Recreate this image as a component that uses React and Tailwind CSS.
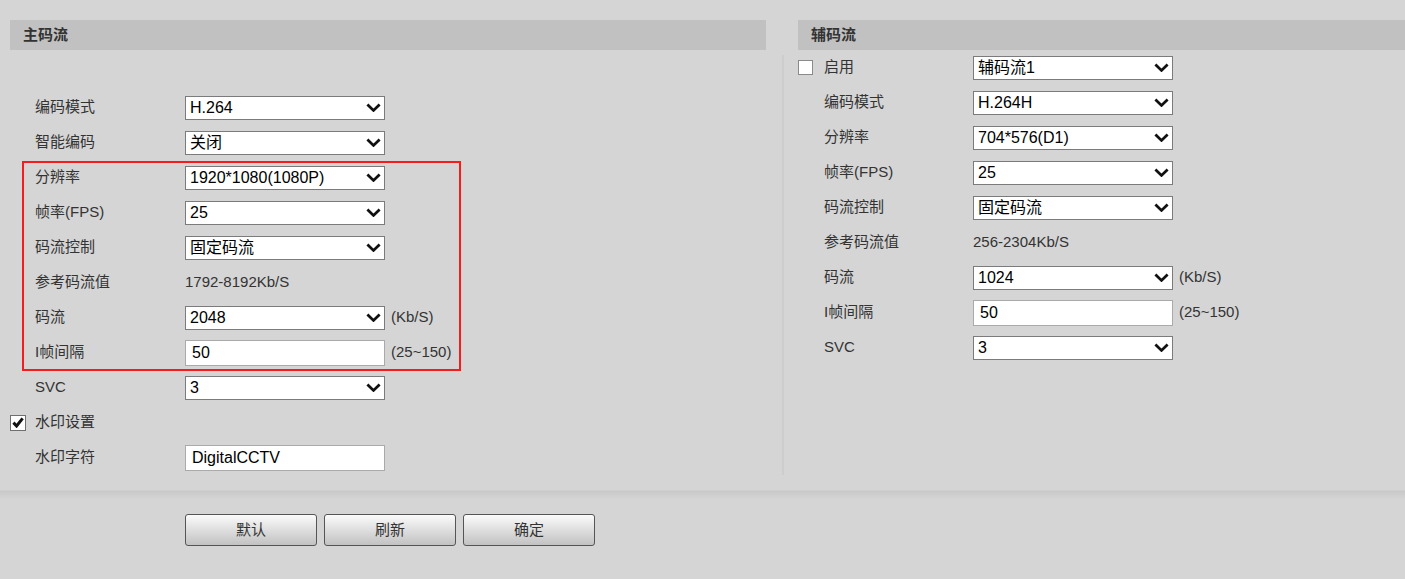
import React from "react";

const Chevron = () => (
  <svg width="15" height="9" viewBox="0 0 15 9" className="shrink-0">
    <path d="M1.4 1.6 L7.5 7.4 L13.6 1.6" fill="none" stroke="#111" strokeWidth="2.8" />
  </svg>
);

const Select = ({ value }) => (
  <div className="flex items-center justify-between w-[200px] h-[24px] bg-white border border-[#7b7b7b] pl-[4px] pr-[3px] text-[16px] text-black leading-none">
    <span>{value}</span>
    <Chevron />
  </div>
);

const TextBox = ({ value }) => (
  <div className="flex items-center w-[200px] h-[26px] bg-white border border-[#aaaaaa] pl-[6px] text-[16px] text-black leading-none">
    {value}
  </div>
);

const Unit = ({ children }) => <span className="ml-[6px] text-[15px] text-[#333]">{children}</span>;

const Row = ({ label, side = "left", children }) => (
  <div className={`flex items-center h-[35px] ${side === "left" ? "pl-[25px]" : "pl-[26px]"}`}>
    <div className={`${side === "left" ? "w-[150px]" : "w-[149px]"} text-[15px] text-[#333]`}>{label}</div>
    {children}
  </div>
);

const CheckBox = ({ checked }) => (
  <div
    className={`flex items-center justify-center bg-white ${
      checked ? "w-[16px] h-[16px] border border-[#6f6f6f]" : "w-[15px] h-[15px] border border-[#8a8a8a]"
    }`}
  >
    {checked && (
      <svg width="12" height="11" viewBox="0 0 12 11">
        <path d="M1.4 5.6 L4.6 9 L10.6 1.4" fill="none" stroke="#111" strokeWidth="3" />
      </svg>
    )}
  </div>
);

const Header = ({ title }) => (
  <div className="flex items-center h-[30px] bg-[#c1c1c1] pl-[13px] text-[15px] font-bold text-[#333]">{title}</div>
);

const App = () => {
  return (
    <div className="w-[1405px] h-[579px] bg-[#d5d5d5] font-['Liberation_Sans','Noto_Sans_CJK_SC',sans-serif] overflow-hidden">
      <div className="flex pt-[20px] pb-[15px] pl-[10px]">
        {/* main stream */}
        <div className="w-[756px]">
          <Header title="主码流" />
          <div className="h-[40px]" />
          <Row label="编码模式">
            <Select value="H.264" />
          </Row>
          <Row label="智能编码">
            <Select value="关闭" />
          </Row>
          <div className="relative">
            <Row label="分辨率">
              <Select value="1920*1080(1080P)" />
            </Row>
            <Row label="帧率(FPS)">
              <Select value="25" />
            </Row>
            <Row label="码流控制">
              <Select value="固定码流" />
            </Row>
            <Row label="参考码流值">
              <span className="text-[15px] text-[#333]">1792-8192Kb/S</span>
            </Row>
            <Row label="码流">
              <Select value="2048" />
              <Unit>(Kb/S)</Unit>
            </Row>
            <Row label="I帧间隔">
              <TextBox value="50" />
              <Unit>(25~150)</Unit>
            </Row>
            <div className="absolute left-[12px] top-[1px] w-[439px] h-[210px] border-2 border-[#f41c1c] pointer-events-none" />
          </div>
          <Row label="SVC">
            <Select value="3" />
          </Row>
          <div className="flex items-center h-[35px]">
            <CheckBox checked />
            <span className="ml-[9px] text-[15px] text-[#333]">水印设置</span>
          </div>
          <Row label="水印字符">
            <TextBox value="DigitalCCTV" />
          </Row>
        </div>

        <div className="ml-[16px] mt-[35px] w-[2px] bg-[#cdcdcd]" />

        {/* sub stream */}
        <div className="ml-[14px] flex-1">
          <Header title="辅码流" />
          <div className="flex items-center h-[35px]">
            <CheckBox />
            <span className="ml-[11px] w-[149px] text-[15px] text-[#333]">启用</span>
            <Select value="辅码流1" />
          </div>
          <Row side="right" label="编码模式">
            <Select value="H.264H" />
          </Row>
          <Row side="right" label="分辨率">
            <Select value="704*576(D1)" />
          </Row>
          <Row side="right" label="帧率(FPS)">
            <Select value="25" />
          </Row>
          <Row side="right" label="码流控制">
            <Select value="固定码流" />
          </Row>
          <Row side="right" label="参考码流值">
            <span className="text-[15px] text-[#333]">256-2304Kb/S</span>
          </Row>
          <Row side="right" label="码流">
            <Select value="1024" />
            <Unit>(Kb/S)</Unit>
          </Row>
          <Row side="right" label="I帧间隔">
            <TextBox value="50" />
            <Unit>(25~150)</Unit>
          </Row>
          <Row side="right" label="SVC">
            <Select value="3" />
          </Row>
        </div>
      </div>

      <div className="h-[9px] border-t border-[#cfcfcf] bg-gradient-to-b from-[#c8c8c8] to-[#d5d5d5]" />

      <div className="flex gap-[7px] pl-[185px] mt-[15px]">
        {["默认", "刷新", "确定"].map((t) => (
          <button
            key={t}
            className="w-[132px] h-[32px] rounded-[3px] border border-[#555] bg-gradient-to-b from-[#fbfbfb] to-[#c2c2c2] text-[15px] text-[#333]"
          >
            {t}
          </button>
        ))}
      </div>
    </div>
  );
};

export default App;
